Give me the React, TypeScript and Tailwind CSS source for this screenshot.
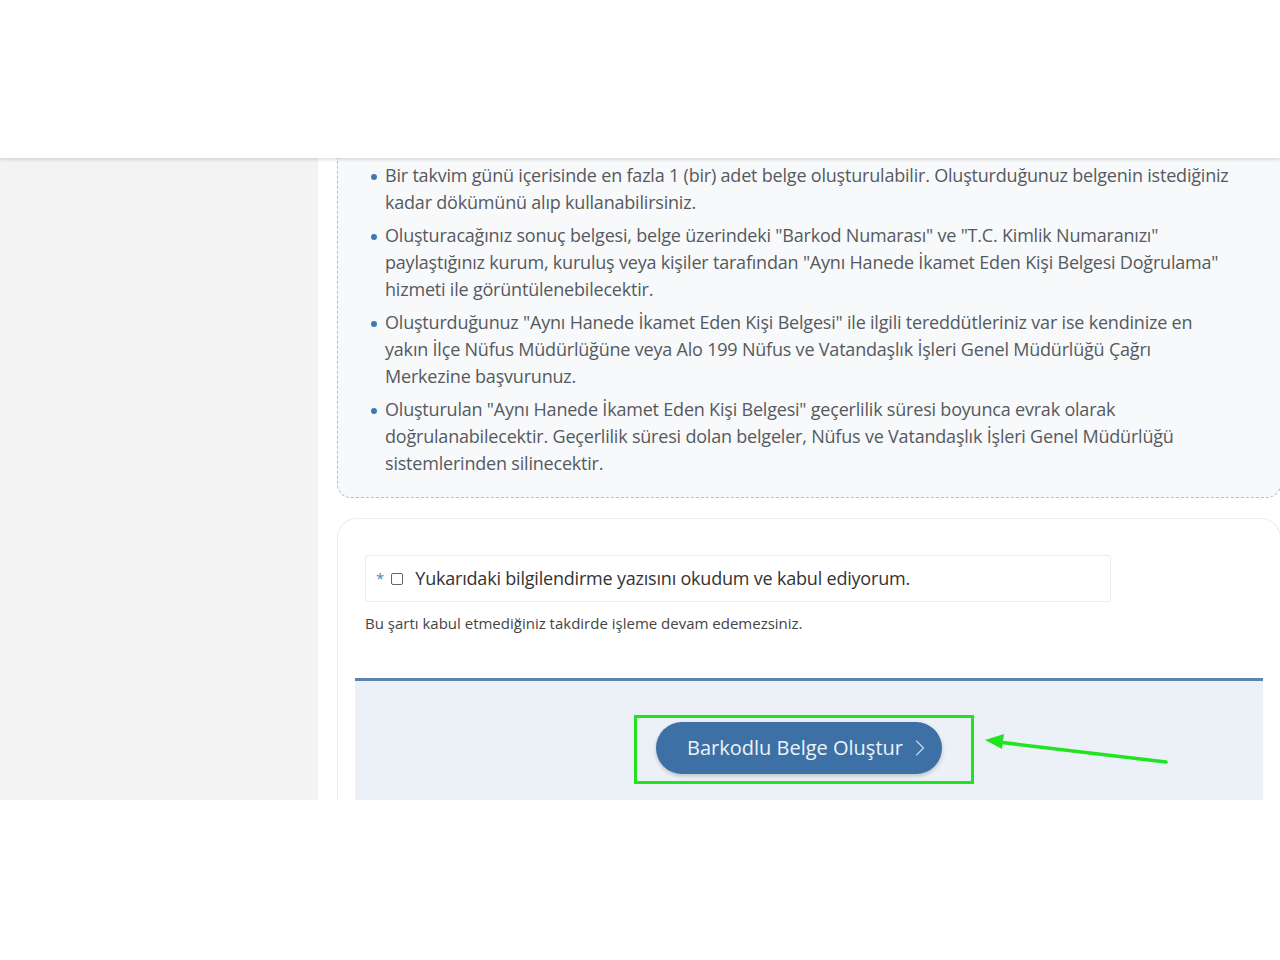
import { ChevronRight } from 'lucide-react'

const ITEMS = [
  'Bir takvim günü içerisinde en fazla 1 (bir) adet belge oluşturulabilir. Oluşturduğunuz belgenin istediğiniz kadar dökümünü alıp kullanabilirsiniz.',
  'Oluşturacağınız sonuç belgesi, belge üzerindeki "Barkod Numarası" ve "T.C. Kimlik Numaranızı" paylaştığınız kurum, kuruluş veya kişiler tarafından "Aynı Hanede İkamet Eden Kişi Belgesi Doğrulama" hizmeti ile görüntülenebilecektir.',
  'Oluşturduğunuz "Aynı Hanede İkamet Eden Kişi Belgesi" ile ilgili tereddütleriniz var ise kendinize en yakın İlçe Nüfus Müdürlüğüne veya Alo 199 Nüfus ve Vatandaşlık İşleri Genel Müdürlüğü Çağrı Merkezine başvurunuz.',
  'Oluşturulan "Aynı Hanede İkamet Eden Kişi Belgesi" geçerlilik süresi boyunca evrak olarak doğrulanabilecektir. Geçerlilik süresi dolan belgeler, Nüfus ve Vatandaşlık İşleri Genel Müdürlüğü sistemlerinden silinecektir.',
]

export default function App() {
  return (
    <div className="relative h-[960px] w-[1280px] overflow-hidden bg-white font-['Open_Sans',sans-serif]">
      {/* header strip (empty in the capture) */}
      <div className="relative z-10 h-[158px] bg-white shadow-[0_2px_3px_rgba(0,0,0,0.12)]" />

      <div className="flex h-[642px] overflow-hidden">
        <aside className="w-[318px] shrink-0 bg-[#f3f3f3]" />

        <div className="flex flex-1 flex-col pl-[19px]">
          {/* info box, top scrolled out of view */}
          <div className="rounded-bl-[14px] rounded-br-[14px] border-b border-l border-r border-dashed border-[#b9bec4] border-t-0 bg-[#f7f9fb] pb-[20px] pl-[33px] pr-[46px] pt-[4px]">
            <ul className="flex flex-col gap-[6px]">
              {ITEMS.map((t) => (
                <li key={t} className="flex text-[18px] leading-[27px] tracking-[-0.2px] text-[#555a60]">
                  <span className="mr-[8px] mt-[12px] h-[6px] w-[6px] shrink-0 rounded-full bg-[#3f7bb0]" />
                  <span>{t}</span>
                </li>
              ))}
            </ul>
          </div>

          {/* accept card */}
          <div className="mt-[20px] flex-1 rounded-tl-[20px] rounded-tr-[20px] border border-b-0 border-[#ececec] bg-white px-[17px] pt-[36px]">
            <div className="pl-[10px]">
              <div className="flex h-[47px] w-[746px] items-center rounded-[3px] border border-[#ececec] pl-[10px]">
                <span className="mr-[7px] text-[15px] text-[#4f86b8]">*</span>
                <span className="mr-[12px] h-[12px] w-[12px] rounded-[2px] border-[1.5px] border-[#666]" />
                <span className="text-[18px] tracking-[-0.2px] text-[#333]">
                  Yukarıdaki bilgilendirme yazısını okudum ve kabul ediyorum.
                </span>
              </div>
              <p className="mt-[10px] text-[15px] text-[#444]">
                Bu şartı kabul etmediğiniz takdirde işleme devam edemezsiniz.
              </p>
            </div>

            <div className="mt-[43px] h-[200px] w-[908px] border-t-[3px] border-[#5b85ad] bg-[#ecf1f7]">
              <div className="flex justify-center pr-[10px] pt-[34px]">
                <div className="border-[3px] border-[#21e421] pb-[7px] pl-[19px] pr-[29px] pt-[4px]">
                  <button className="flex h-[52px] w-[286px] items-center gap-[3px] rounded-full bg-[#3d71a6] pl-[31px] text-[20px] text-[#eef3f8] shadow-[0_2px_4px_rgba(0,0,0,0.2)]">
                    Barkodlu Belge Oluştur
                    <ChevronRight size={28} strokeWidth={1} className="text-[#c9d8e8]" />
                  </button>
                </div>
              </div>
            </div>
          </div>
        </div>
      </div>

      {/* annotation arrow */}
      <svg className="absolute left-[980px] top-[730px]" width="200" height="45" viewBox="0 0 200 45">
        <line x1="186" y1="32" x2="18" y2="12" stroke="#21e421" strokeWidth="3.5" strokeLinecap="round" />
        <polygon points="5,10 24,4 22,19" fill="#21e421" />
      </svg>
    </div>
  )
}
